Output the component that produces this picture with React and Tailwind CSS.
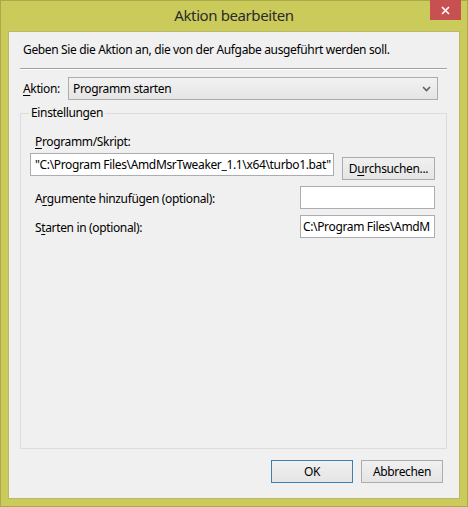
import React from 'react';

const font = { fontFamily: '"Noto Sans", "Open Sans", sans-serif' };

function Underlined({ text, index }) {
  return (
    <>
      {text.slice(0, index)}
      <span className="underline underline-offset-2">{text[index]}</span>
      {text.slice(index + 1)}
    </>
  );
}

export default function App() {
  return (
    <div className="w-[468px] h-[507px] bg-[#cbcb5c] border border-[#a9a947] flex flex-col text-[12px] leading-[18px] tracking-[-0.35px] text-black" style={font}>
      {/* Title bar */}
      <div className="relative h-[30px] flex items-center justify-center">
        <span className="text-[15px] text-[#2b2b2b] -mt-[2px] tracking-[-0.4px]">Aktion bearbeiten</span>
        <button className="absolute top-[-1px] right-[6px] w-[31px] h-[20px] bg-[#c75050] flex items-center justify-center">
          <svg width="9" height="9" viewBox="0 0 9 9">
            <path d="M1 1 L8 8 M8 1 L1 8" stroke="white" strokeWidth="1.6" />
          </svg>
        </button>
      </div>

      {/* Client */}
      <div className="mx-[7px] h-[468px] bg-[#f0f0f0] border border-[#b9b96a] flex flex-col">
        <div className="pl-[14px] pt-[9px] h-[26px]">Geben Sie die Aktion an, die von der Aufgabe ausgeführt werden soll.</div>

        <div className="ml-[11px] mr-[12px] mt-[10px] border-t border-[#a0a0a0] border-b border-b-white" />

        <div className="flex items-center ml-[14px] mr-[21px] mt-[7px] gap-[8px]">
          <span><Underlined text="Aktion:" index={0} /></span>
          <div className="flex-1 h-[23px] border border-[#acacac] bg-gradient-to-b from-[#f2f2f2] to-[#e5e5e5] flex items-center justify-between px-[4px]">
            <span>Programm starten</span>
            <svg width="9" height="6" viewBox="0 0 9 6" className="mr-[2px]">
              <path d="M1 1 L4.5 4.5 L8 1" stroke="#606060" strokeWidth="1.6" fill="none" />
            </svg>
          </div>
        </div>

        {/* Group box */}
        <div className="relative ml-[11px] mr-[12px] mt-[13px] h-[336px] border border-[#dcdcdc] flex flex-col">
          <span className="absolute -top-[10px] left-[8px] px-[2px] bg-[#f0f0f0]">Einstellungen</span>

          <div className="ml-[14px] mt-[19px]"><Underlined text="Programm/Skript:" index={0} /></div>
          <div className="flex items-start ml-[9px] mt-[2px] gap-[8px]">
            <div className="w-[304px] h-[23px] bg-white border border-[#abadb3] flex items-center px-[4px] whitespace-nowrap overflow-hidden">
              "C:\Program Files\AmdMsrTweaker_1.1\x64\turbo1.bat"
            </div>
            <button className="w-[93px] h-[23px] mt-[4px] border border-[#acacac] bg-gradient-to-b from-[#f0f0f0] to-[#e5e5e5]">
              <Underlined text="Durchsuchen..." index={1} />
            </button>
          </div>

          <div className="flex items-center ml-[14px] mr-[11px] mt-[6px] justify-between">
            <span className="mt-[2px]"><Underlined text="Argumente hinzufügen (optional):" index={1} /></span>
            <div className="w-[135px] h-[23px] bg-white border border-[#abadb3]" />
          </div>

          <div className="flex items-center ml-[14px] mr-[11px] mt-[6px] justify-between">
            <span className="mt-[2px]"><Underlined text="Starten in (optional):" index={1} /></span>
            <div className="w-[135px] h-[23px] bg-white border border-[#abadb3] flex items-center px-[2px] whitespace-nowrap overflow-hidden">
              C:\Program Files\AmdM
            </div>
          </div>
        </div>

        <div className="flex justify-end gap-[8px] mr-[16px] mt-[11px]">
          <button className="w-[82px] h-[23px] border border-[#3c7fb1] bg-gradient-to-b from-[#f0f0f0] to-[#e5e5e5]">OK</button>
          <button className="w-[82px] h-[23px] border border-[#acacac] bg-gradient-to-b from-[#f0f0f0] to-[#e5e5e5]">Abbrechen</button>
        </div>
      </div>
    </div>
  );
}
